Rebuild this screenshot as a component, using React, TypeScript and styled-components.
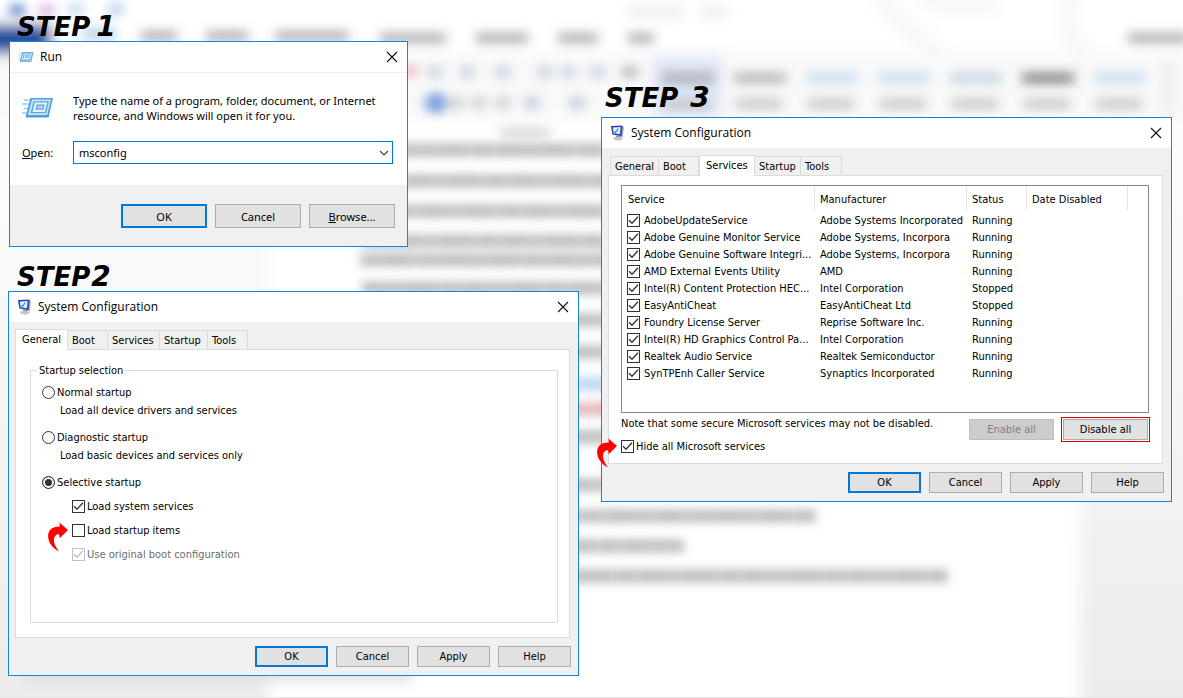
import React from "react";
import styled, { createGlobalStyle, css } from "styled-components";

const UI_FONT = `"Noto Sans", "Open Sans", sans-serif`;
const CLASSIC_FONT = `"DejaVu Sans Condensed", "Noto Sans", sans-serif`;

const GlobalStyle = createGlobalStyle`
  *, *::before, *::after { box-sizing: border-box; }
  html, body, #root { min-height: 100vh; }
  body {
    margin: 0;
    background: #fff;
    color: #000;
    font-family: ${UI_FONT};
    font-size: 11px;
    line-height: 15px;
  }
  button, select, input { font: inherit; color: inherit; margin: 0; }
`;

/* ---------- page ---------- */

const Page = styled.main`
  position: relative;
  display: flex;
  gap: 22px;
  min-height: 100vh;
  padding: 13px 11px 22px 8px;
  overflow: hidden;
`;

const Backdrop = styled.svg`
  position: absolute;
  inset: 0;
  width: 100%;
  height: 100%;
`;

const Column = styled.div<{ $top?: number }>`
  position: relative;
  flex: 1;
  min-width: 0;
  padding-top: ${(p) => p.$top ?? 0}px;
`;

const StepTitle = styled.h2<{ $gap: number; $raised?: boolean }>`
  display: flex;
  align-items: baseline;
  gap: ${(p) => p.$gap}px;
  height: 28px;
  margin: 0 0 ${(p) => (p.$raised ? 5 : 0)}px;
  padding-left: ${(p) => (p.$raised ? 4 : 9)}px;
  font: italic bold 26px/28px "DejaVu Sans", sans-serif;
`;

const StepNumber = styled.span`
  font-size: 28px;
`;

const Dialog = styled.section<{ $narrow?: boolean }>`
  display: flex;
  flex-direction: column;
  border: 1px solid #1883d7;
  background: #f0f0f0;
  font-family: ${(p) => (p.$narrow ? UI_FONT : CLASSIC_FONT)};
  ${(p) =>
    p.$narrow &&
    css`
      max-width: 399px;
      margin: 0 0 16px 1px;
    `}
`;

const TitleBar = styled.header`
  display: flex;
  align-items: center;
  height: 30px;
  padding: 0 9px 0 8px;
  background: #fff;
`;

const TitleText = styled.h3`
  flex: 1;
  margin: 0 0 0 6px;
  font: 400 12px/16px "Open Sans", "Noto Sans", sans-serif;
`;

const CloseButton = styled.button`
  display: flex;
  padding: 0;
  border: 0;
  background: none;
`;

const buttonWidths = { small: 73, wide: 85, tall: 86 };

const PushButton = styled.button<{ $primary?: boolean; $size?: keyof typeof buttonWidths }>`
  width: ${(p) => buttonWidths[p.$size ?? "small"]}px;
  height: ${(p) => (p.$size === "tall" ? 24 : 21)}px;
  padding: 0;
  border: ${(p) => (p.$primary ? "2px solid #0078d7" : "1px solid #adadad")};
  background: #e1e1e1;
  &:disabled {
    border-color: #bfbfbf;
    background: #ccc;
    color: #838383;
  }
`;

const Footer = styled.footer<{ $tall?: boolean }>`
  display: flex;
  justify-content: flex-end;
  gap: 8px;
  padding: ${(p) => (p.$tall ? "19px 12px 18px" : "8px 7px")};
`;

/* ---------- run dialog ---------- */

const RunBody = styled.div`
  display: grid;
  grid-template-columns: 51px 1fr;
  row-gap: 18px;
  align-items: center;
  padding: 20px 14px 21px 12px;
  border-top: 1px solid #eee;
  background: #fff;
`;

const RunText = styled.p`
  margin: 0;
`;

const Combo = styled.span`
  position: relative;
  display: flex;
  align-items: center;
`;

const ComboSelect = styled.select`
  width: 100%;
  height: 23px;
  padding: 0 5px;
  border: 1px solid #0078d7;
  border-radius: 0;
  background: #fff;
  appearance: none;
`;

const ComboArrow = styled.svg`
  position: absolute;
  right: 4px;
  pointer-events: none;
`;

/* ---------- tabs ---------- */

const TabList = styled.div<{ $inset?: boolean }>`
  display: flex;
  align-items: flex-end;
  height: 27px;
  padding-left: ${(p) => (p.$inset ? 8 : 6)}px;
`;

const Tab = styled.button<{ $width: number; $joined?: boolean }>`
  width: ${(p) => p.$width}px;
  height: 19px;
  padding: 1px 0 0 4px;
  border: 1px solid #dcdcdc;
  border-left-width: ${(p) => (p.$joined ? 0 : 1)}px;
  border-bottom: 0;
  background: #f0f0f0;
  text-align: left;
  white-space: nowrap;
  &[aria-selected="true"] {
    position: relative;
    height: 21px;
    margin-bottom: -1px;
    padding: 0 0 2px 6px;
    border-left-width: 1px;
    background: #fff;
  }
`;

const TabPanel = styled.div`
  height: 289px;
  margin: 0 8px 0 6px;
  border: 1px solid #dcdcdc;
  background: #fff;
`;

/* ---------- general tab ---------- */

const Group = styled.fieldset`
  height: 260px;
  margin: 13px 11px 0 14px;
  padding: 7px 0 0 11px;
  border: 1px solid #dcdcdc;
`;

const Legend = styled.legend`
  margin-left: -5px;
  padding: 0 2px;
`;

const Hint = styled.p`
  margin: 3px 0 12px 18px;
`;

const OptionLabel = styled.label<{ $indent?: boolean; $disabled?: boolean }>`
  position: relative;
  display: flex;
  align-items: center;
  gap: 2px;
  width: max-content;
  margin: ${(p) => (p.$indent ? "9px 0 0 30px" : "0")};
  color: ${(p) => (p.$disabled ? "#6d6d6d" : "#000")};
`;

const Radio = styled.input.attrs({ type: "radio" })`
  width: 13px;
  height: 13px;
  border: 1px solid #333;
  border-radius: 50%;
  background: #fff;
  appearance: none;
  &:checked {
    background: #333;
    box-shadow: inset 0 0 0 2px #fff;
  }
`;

const TICK =
  "url(\"data:image/svg+xml,%3Csvg xmlns='http://www.w3.org/2000/svg' viewBox='0 0 11 11'%3E%3Cpath d='M1 5.200l3 3 6-6.400' fill='none' stroke='%23333' stroke-width='1.3'/%3E%3C/svg%3E\")";

const CheckBox = styled.input.attrs({ type: "checkbox" })`
  flex: none;
  width: 13px;
  height: 13px;
  border: 1px solid #333;
  background: #fff;
  appearance: none;
  &:checked {
    background: #fff ${TICK} center / 11px 11px no-repeat;
  }
  &:disabled {
    opacity: 0.3;
  }
`;

const Arrow = styled.svg`
  position: absolute;
  top: -1px;
  right: calc(100% + 4px);
`;

/* ---------- services tab ---------- */

const ServicesPanel = styled(TabPanel)`
  padding: 9px 13px 0 12px;
`;

const ListFrame = styled.div`
  height: 228px;
  border: 1px solid #828790;
`;

const ServiceTable = styled.table`
  width: 100%;
  border-collapse: collapse;
  table-layout: fixed;
  th {
    height: 25px;
    padding: 1px 0 0 5px;
    background: linear-gradient(#e5e5e5, #e5e5e5) right top / 1px 24px no-repeat;
    font-weight: 400;
    text-align: left;
  }
  th:first-child {
    padding-left: 6px;
  }
  th:last-child {
    background: none;
  }
  td {
    height: 17px;
    padding: 1px 0 0 5px;
    white-space: nowrap;
  }
`;

const ServiceLabel = styled.label`
  display: flex;
  align-items: center;
  gap: 4px;
`;

const BelowList = styled.div`
  display: flex;
  justify-content: space-between;
  align-items: flex-start;
`;

const Notes = styled.div`
  p {
    margin: 3px 0 8px;
  }
`;

const BulkButtons = styled.div`
  display: flex;
  gap: 7px;
  margin: 4px -1px 0 0;
  align-items: center;
`;

const Highlight = styled.span`
  display: flex;
  padding: 1px;
  border: 1px solid #e00000;
`;

/* ---------- drawings ---------- */

const CloseIcon = () => (
  <svg width="12" height="12" viewBox="0 0 12 12" aria-hidden="true">
    <path d="M1 1l10 10M11 1L1 11" stroke="#111" strokeWidth="1.1" />
  </svg>
);

const RunIcon = ({ size }: { size: number }) => (
  <svg width={size} height={(size * 24) / 32} viewBox="0 0 32 24" aria-hidden="true">
    <path d="M2 4h7M0 8h8M2 12.500h5M0 17h6" stroke="#9ccbee" strokeWidth="1.300" />
    <path d="M8.500 2h22.500l-4.500 19.500H3.500z" fill="#4a9fdc" />
    <path d="M10 3.500h19l-3.800 15.500H6z" fill="#c9e8fa" />
    <path d="M11.500 5.200h15.500l-3 12H8.500z" fill="#5aa9e2" />
    <path d="M12.800 6.500h12.500l-2.500 9.400H10.500z" fill="#e4f4fd" />
    <path d="M14.800 8.500h8l-1.300 5.200H13.300z" fill="#6f9fdc" />
    <path d="M15.800 9.800h5.500l-.7 2.700H15z" fill="#b4d2f2" />
  </svg>
);

const ConfigIcon = () => (
  <svg width="15" height="16" viewBox="0 0 15 16" aria-hidden="true">
    <path d="M12 1l2 1.200-1.300 10-2.500-.8z" fill="#a9a9b6" />
    <path d="M1 1L12.500 .6l-1.100 10.600L2.400 9.600z" fill="#2d3fb5" />
    <path d="M2.800 2.400l7.900-.4-.8 7.300-6.300-1.100z" fill="#dceefc" />
    <path d="M4.500 6.300l1 1.200 2.800-4" fill="none" stroke="#2a8fd0" strokeWidth="1.200" />
    <path d="M6 10.500l4.500.8.500 1.900H5.500z" fill="#9a9aa6" />
    <path d="M3 13l3-1 6 .4 1 1.600-4 1.700-5-.9z" fill="#c4c4cc" />
  </svg>
);

const RedArrow = () => (
  <Arrow width="20" height="30" viewBox="0 0 20 30" aria-hidden="true">
    <path
      d="M10.800 0L20 8l-8.600 8.600c.5-2.300.1-3.800-1.200-4.600C4.500 13.500 4.200 21.500 11 29.500 3 25.500-.5 18.500.2 12.500.9 7 5.500 4.300 11.600 4.500c.4-1.500.2-2.800-.8-4.500z"
      fill="#f00"
    />
  </Arrow>
);

type Smear = { x: number; y: number; w: number; c?: string; o?: number };

const textLines: Smear[] = [
  { x: 400, y: 150, w: 215 },
  { x: 400, y: 181, w: 215 },
  { x: 400, y: 211, w: 215 },
  { x: 362, y: 241, w: 250 },
  { x: 360, y: 260, w: 250 },
  { x: 362, y: 288, w: 250 },
  { x: 560, y: 320, w: 60 },
  { x: 560, y: 352, w: 60 },
  { x: 560, y: 384, w: 60, c: "#a8cbe8" },
  { x: 560, y: 409, w: 60, c: "#e0a0a0" },
  { x: 560, y: 437, w: 60 },
  { x: 560, y: 485, w: 60 },
  { x: 560, y: 516, w: 256 },
  { x: 560, y: 546, w: 124 },
  { x: 560, y: 576, w: 388 },
];

const ribbonTabs: Smear[] = [
  { x: 82, y: 34, w: 34, c: "#a9c0e2" },
  { x: 141, y: 36, w: 36 },
  { x: 206, y: 36, w: 42 },
  { x: 275, y: 36, w: 74 },
  { x: 380, y: 38, w: 66 },
  { x: 476, y: 38, w: 52 },
  { x: 558, y: 38, w: 40 },
  { x: 628, y: 38, w: 26 },
  { x: 1128, y: 38, w: 60 },
  { x: 628, y: 12, w: 56, o: 0.15 },
  { x: 700, y: 12, w: 30, o: 0.15 },
  { x: 500, y: 133, w: 50, o: 0.35 },
];

const stylePreviews = ["#888", "#888", "#a9cdea", "#a9cdea", "#a9bdd4", "#333", "#a9cdea"];

const Blur = () => (
  <Backdrop viewBox="0 0 1183 698" preserveAspectRatio="xMinYMin slice" aria-hidden="true">
    <defs>
      <filter id="soft" x="-10%" y="-10%" width="120%" height="120%">
        <feGaussianBlur stdDeviation="6 5" />
      </filter>
      <filter id="smear" x="-10%" y="-10%" width="120%" height="120%">
        <feGaussianBlur stdDeviation="5 4" />
      </filter>
      <filter id="softer" x="-20%" y="-20%" width="140%" height="140%">
        <feGaussianBlur stdDeviation="7" />
      </filter>
      <linearGradient id="desk" x1="0" y1="0" x2="0" y2="1">
        <stop offset="0" stopColor="#fff" />
        <stop offset="0.35" stopColor="#fafafa" />
        <stop offset="1" stopColor="#ececec" />
      </linearGradient>
    </defs>
    <rect width="1183" height="698" fill="url(#desk)" />
    <g filter="url(#softer)">
      <rect x="268" y="110" width="812" height="610" fill="#fff" />
      <rect x="-20" y="-20" width="1230" height="72" fill="#fff" />
      <rect x="-20" y="52" width="1230" height="68" fill="#f9f9f9" />
      <path
        d="M875 -20q8 30 36 50q30 20 32 32M910 -20q30 40 90 20M1080 -20q-30 50 10 76"
        fill="none"
        stroke="#f8f8f8"
        strokeWidth="20"
      />
      <rect x="-20" y="24" width="72" height="30" fill="#1d4f9e" />
      <rect x="652" y="56" width="70" height="62" fill="#dfe7f6" />
      <rect x="24" y="655" width="390" height="26" fill="#dedee2" />
    </g>
    <g filter="url(#soft)">
      <circle cx="17" cy="10" r="7" fill="#5f85c6" />
      <circle cx="47" cy="10" r="7" fill="#d9b2e0" />
      <circle cx="76" cy="9" r="8" fill="#cfe0f0" />
      <circle cx="116" cy="9" r="8" fill="#c3d8ee" />
      <circle cx="410" cy="71" r="7" fill="#f3b6bd" />
      <circle cx="436" cy="103" r="11" fill="#7fa4dd" />
      {[435, 467, 503, 545, 568, 598, 630].map((x) => (
        <circle key={x} cx={x} cy="72" r="8" fill={x === 630 ? "#c0c0c0" : "#d0d8e6"} />
      ))}
      {[456, 479, 503, 532, 577].map((x) => (
        <circle key={x} cx={x} cy="103" r="8" fill={x > 520 ? "#c8d2e2" : "#d6d6d6"} />
      ))}
      {ribbonTabs.map((s) => (
        <path
          key={`${s.x}-${s.y}`}
          d={`M${s.x} ${s.y}h${s.w}`}
          stroke={s.c ?? "#a2a2a2"}
          strokeOpacity={s.o ?? 0.65}
          strokeWidth="13"
        />
      ))}
      {stylePreviews.map((c, i) => (
        <g key={i} strokeWidth="14">
          <path d={`M${662 + i * 72} 78h52`} stroke={c} strokeOpacity="0.45" />
          <path d={`M${664 + i * 72} 104h46`} stroke="#bdbdbd" strokeOpacity="0.6" />
        </g>
      ))}
      <path d="M1168 58v60" stroke="#ddd" strokeWidth="4" />
    </g>
    <g filter="url(#smear)">
      {textLines.map((s) => (
        <g key={s.y} stroke={s.c ?? "#acacac"} strokeWidth="14">
          <path d={`M${s.x} ${s.y}h${s.w}`} strokeOpacity="0.65" />
          <path
            d={`M${s.x} ${s.y}h${s.w}`}
            strokeOpacity="0.25"
            strokeDasharray="16 7 24 5 9 6 30 8"
            strokeDashoffset={s.y * 3}
          />
        </g>
      ))}
    </g>
    <path d="M0 697.500h1183" stroke="#e8e8e8" />
  </Backdrop>
);

/* ---------- content ---------- */

const services: [string, string, string][] = [
  ["AdobeUpdateService", "Adobe Systems Incorporated", "Running"],
  ["Adobe Genuine Monitor Service", "Adobe Systems, Incorpora", "Running"],
  ["Adobe Genuine Software Integri...", "Adobe Systems, Incorpora", "Running"],
  ["AMD External Events Utility", "AMD", "Running"],
  ["Intel(R) Content Protection HEC...", "Intel Corporation", "Stopped"],
  ["EasyAntiCheat", "EasyAntiCheat Ltd", "Stopped"],
  ["Foundry License Server", "Reprise Software Inc.", "Running"],
  ["Intel(R) HD Graphics Control Pa...", "Intel Corporation", "Running"],
  ["Realtek Audio Service", "Realtek Semiconductor", "Running"],
  ["SynTPEnh Caller Service", "Synaptics Incorporated", "Running"],
];

const Heading = ({ n, gap, raised }: { n: number; gap: number; raised?: boolean }) => (
  <StepTitle $gap={gap} $raised={raised}>
    STEP <StepNumber>{n}</StepNumber>
  </StepTitle>
);

const DialogTitle = ({ icon, children }: { icon: React.ReactNode; children: string }) => (
  <TitleBar>
    {icon}
    <TitleText>{children}</TitleText>
    <CloseButton aria-label="Close">
      <CloseIcon />
    </CloseButton>
  </TitleBar>
);

const Tabs = ({ active, widths }: { active: number; widths: number[] }) => (
  <TabList role="tablist" $inset={active !== 0}>
    {["General", "Boot", "Services", "Startup", "Tools"].map((name, i) => (
      <Tab
        key={name}
        role="tab"
        aria-selected={i === active}
        $width={widths[i]}
        $joined={i > 0}
      >
        {name}
      </Tab>
    ))}
  </TabList>
);

const ConfigButtons = () => (
  <Footer>
    <PushButton $primary>OK</PushButton>
    <PushButton>Cancel</PushButton>
    <PushButton>Apply</PushButton>
    <PushButton>Help</PushButton>
  </Footer>
);

export default function App() {
  return (
    <>
      <GlobalStyle />
      <Page>
        <Blur />
        <Column>
          <Heading n={1} gap={6} />
          <Dialog $narrow>
            <DialogTitle icon={<RunIcon size={16} />}>Run</DialogTitle>
            <RunBody>
              <RunIcon size={32} />
              <RunText>
                Type the name of a program, folder, document, or Internet
                <br />
                resource, and Windows will open it for you.
              </RunText>
              <label htmlFor="open">
                <u>O</u>pen:
              </label>
              <Combo>
                <ComboSelect id="open">
                  <option>msconfig</option>
                </ComboSelect>
                <ComboArrow width="10" height="6" viewBox="0 0 10 6" aria-hidden="true">
                  <path d="M1 1l4 4 4-4" fill="none" stroke="#444" strokeWidth="1.200" />
                </ComboArrow>
              </Combo>
            </RunBody>
            <Footer $tall>
              <PushButton $primary $size="tall">OK</PushButton>
              <PushButton $size="tall">Cancel</PushButton>
              <PushButton $size="tall">
                <u>B</u>rowse...
              </PushButton>
            </Footer>
          </Dialog>

          <Heading n={2} gap={1} />
          <Dialog>
            <DialogTitle icon={<ConfigIcon />}>System Configuration</DialogTitle>
            <Tabs active={0} widths={[53, 40, 52, 48, 40]} />
            <TabPanel role="tabpanel">
              <Group>
                <Legend>Startup selection</Legend>
                <OptionLabel>
                  <Radio name="startup" /> Normal startup
                </OptionLabel>
                <Hint>Load all device drivers and services</Hint>
                <OptionLabel>
                  <Radio name="startup" /> Diagnostic startup
                </OptionLabel>
                <Hint>Load basic devices and services only</Hint>
                <OptionLabel>
                  <Radio name="startup" defaultChecked /> Selective startup
                </OptionLabel>
                <OptionLabel $indent>
                  <CheckBox defaultChecked /> Load system services
                </OptionLabel>
                <OptionLabel $indent>
                  <RedArrow />
                  <CheckBox /> Load startup items
                </OptionLabel>
                <OptionLabel $indent $disabled>
                  <CheckBox defaultChecked disabled /> Use original boot configuration
                </OptionLabel>
              </Group>
            </TabPanel>
            <ConfigButtons />
          </Dialog>
        </Column>

        <Column $top={71}>
          <Heading n={3} gap={12} raised />
          <Dialog>
            <DialogTitle icon={<ConfigIcon />}>System Configuration</DialogTitle>
            <Tabs active={2} widths={[49, 40, 56, 46, 41]} />
            <ServicesPanel role="tabpanel">
              <ListFrame>
                <ServiceTable>
                  <colgroup>
                    <col width="193" />
                    <col width="152" />
                    <col width="60" />
                    <col width="101" />
                    <col />
                  </colgroup>
                  <thead>
                    <tr>
                      <th>Service</th>
                      <th>Manufacturer</th>
                      <th>Status</th>
                      <th>Date Disabled</th>
                      <th aria-label="Blank" />
                    </tr>
                  </thead>
                  <tbody>
                    {services.map(([name, maker, status]) => (
                      <tr key={name}>
                        <td>
                          <ServiceLabel>
                            <CheckBox defaultChecked /> {name}
                          </ServiceLabel>
                        </td>
                        <td>{maker}</td>
                        <td>{status}</td>
                        <td />
                        <td />
                      </tr>
                    ))}
                  </tbody>
                </ServiceTable>
              </ListFrame>
              <BelowList>
                <Notes>
                  <p>Note that some secure Microsoft services may not be disabled.</p>
                  <OptionLabel>
                    <RedArrow />
                    <CheckBox defaultChecked /> Hide all Microsoft services
                  </OptionLabel>
                </Notes>
                <BulkButtons>
                  <PushButton $size="wide" disabled>
                    Enable all
                  </PushButton>
                  <Highlight>
                    <PushButton $size="wide">Disable all</PushButton>
                  </Highlight>
                </BulkButtons>
              </BelowList>
            </ServicesPanel>
            <ConfigButtons />
          </Dialog>
        </Column>
      </Page>
    </>
  );
}
